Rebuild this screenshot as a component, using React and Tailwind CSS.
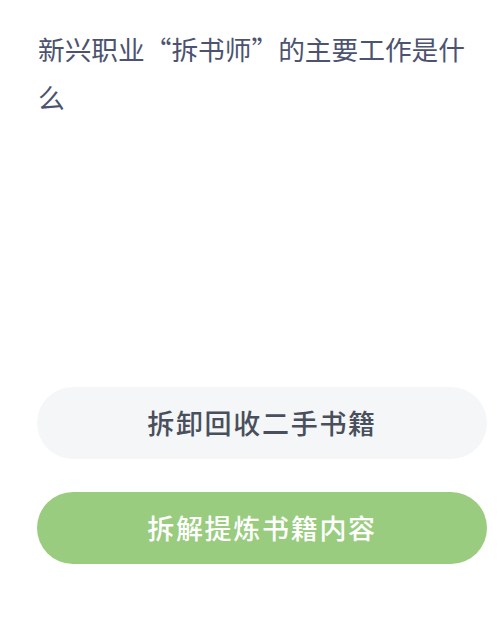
export default function App() {
  const options = [
    { text: "拆卸回收二手书籍", correct: false },
    { text: "拆解提炼书籍内容", correct: true },
  ];

  return (
    <div
      className="h-[642px] w-[499px] overflow-hidden bg-white"
      style={{ fontFamily: '"Noto Sans CJK SC", "Noto Sans", sans-serif' }}
      lang="zh-CN"
    >
      {/* Question */}
      <div className="pl-[38px] pr-[20px] pt-[25px]">
        <h1 className="text-[26.7px] font-normal leading-[48px] text-[#4c5370]">
          新兴职业“拆书师”的主要工作是什么
        </h1>
      </div>

      {/* Options */}
      <div className="mt-[266px] flex flex-col gap-[33px] pl-[37px] pr-[12px]">
        {options.map(({ text, correct }) => (
          <button
            key={text}
            className={`flex h-[72px] w-full items-center justify-center rounded-full text-[27px] font-medium tracking-[1.7px] ${
              correct ? "bg-[#99cc7f] text-white" : "bg-[#f4f6f8] text-[#4a4f5c]"
            }`}
          >
            {text}
          </button>
        ))}
      </div>
    </div>
  );
}
